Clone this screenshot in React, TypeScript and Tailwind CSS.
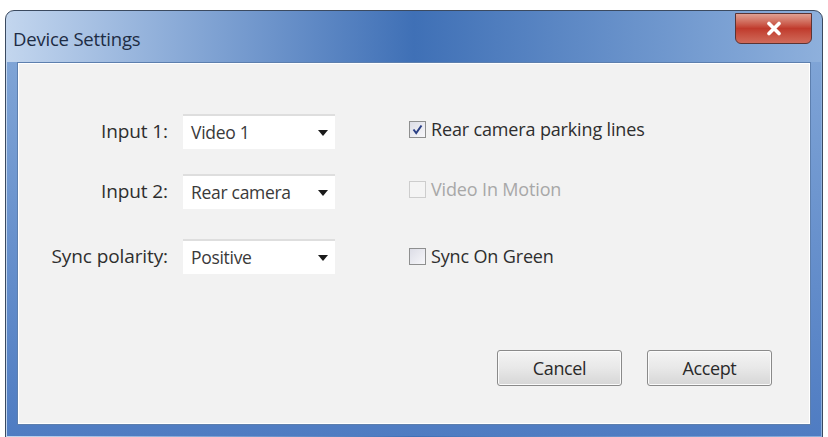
const font = { fontFamily: '"Open Sans", "Noto Sans", sans-serif' };

function Dropdown({ value }: { value: string }) {
  return (
    <div className="flex h-[35px] w-[152px] items-center justify-between border-t-2 border-[#dedede] bg-white pl-[8px] pr-[7px] text-[17.5px] tracking-[-0.3px] text-[#3a3a3a]">
      <span>{value}</span>
      <span className="h-0 w-0 border-x-[5px] border-t-[6px] border-x-transparent border-t-[#1a1a1a]" />
    </div>
  );
}

function Check({ label, checked, disabled }: { label: string; checked?: boolean; disabled?: boolean }) {
  return (
    <div className="flex h-[22px] items-center gap-[5px]">
      <div
        className={`flex h-[17px] w-[17px] items-center justify-center border ${
          disabled ? 'border-[#cdcdcd] bg-[#f4f4f4]' : 'border-[#8e8f8f] bg-gradient-to-br from-[#dcdde6] to-[#f7f7fa]'
        }`}
      >
        {checked && (
          <svg width="11" height="11" viewBox="0 0 11 11">
            <path d="M1.5 5.5 L4.2 9 L9.5 1.5" fill="none" stroke="#2a3f85" strokeWidth="2" />
          </svg>
        )}
      </div>
      <span className={`text-[18px] tracking-[-0.15px] ${disabled ? 'text-[#a8a8a8]' : 'text-[#2e2e2e]'}`}>{label}</span>
    </div>
  );
}

function Btn({ label }: { label: string }) {
  return (
    <button className="h-[36px] w-[125px] rounded-[3px] border border-[#8a8a8a] bg-gradient-to-b from-[#f4f4f4] via-[#e8e8e8] to-[#d6d6d6] text-[18px] tracking-[-0.4px] text-[#2a2a2a] shadow-[inset_0_0_0_1px_#fbfbfb]">
      {label}
    </button>
  );
}

export default function App() {
  return (
    <div className="h-[437px] w-[828px] overflow-hidden bg-white pl-[5px] pr-[5px] pt-[10px]" style={font}>
      <div className="flex h-[428px] flex-col rounded-t-[9px] border border-[#3b4a60] bg-gradient-to-r from-[#c3d6ee] via-[#3f70b6] to-[#8eb0dc] p-[1px]">
        {/* title bar */}
        <div className="flex h-[50px] items-start justify-between pl-[6px] pr-[9px]">
          <div className="pt-[13px] text-[18.5px] tracking-[-0.2px] text-[#1d2c44]">Device Settings</div>
          <button className="mt-[1px] flex h-[31px] w-[77px] items-center justify-center rounded-b-[6px] border border-[#5b3434] bg-gradient-to-b from-[#dfa093] via-[#c03a2c] to-[#d06a5a] text-white">
            <svg width="18" height="15" viewBox="0 0 18 15">
              <path d="M4 2.5 L14 12.5 M14 2.5 L4 12.5" stroke="white" strokeWidth="3.6" strokeLinecap="round" />
            </svg>
          </button>
        </div>

        {/* frame body */}
        <div className="flex flex-1 flex-col bg-gradient-to-b from-[#7fa4d6] to-[#4f7cc2] px-[10px] pb-[11px]">
          <div className="flex flex-1 flex-col border border-[#5d7fae] bg-[#f2f2f2] shadow-[inset_0_0_0_1px_#ffffff]">
            <div className="flex pt-[51px]">
              <div className="flex flex-col">
                {[
                  ['Input 1:', 'Video 1', 'mt-0'],
                  ['Input 2:', 'Rear camera', 'mt-[25px]'],
                  ['Sync polarity:', 'Positive', 'mt-[30px]'],
                ].map(([label, value, mt]) => (
                  <div key={label} className={`flex items-center ${mt}`}>
                    <span className="w-[151px] pr-[1px] text-right text-[19px] tracking-[-0.1px] text-[#2e2e2e]">{label}</span>
                    <span className="ml-[14px]">
                      <Dropdown value={value} />
                    </span>
                  </div>
                ))}
              </div>
              <div className="ml-[74px] flex flex-col pt-[4px]">
                <Check label="Rear camera parking lines" checked />
                <div className="mt-[38px]">
                  <Check label="Video In Motion" disabled />
                </div>
                <div className="mt-[45px]">
                  <Check label="Sync On Green" />
                </div>
              </div>
            </div>
            <div className="mt-auto flex justify-end gap-[25px] pb-[38px] pr-[38px]">
              <Btn label="Cancel" />
              <Btn label="Accept" />
            </div>
          </div>
        </div>
      </div>
    </div>
  );
}
